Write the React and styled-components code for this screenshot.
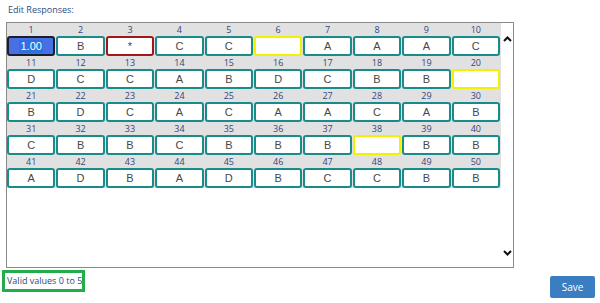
import React from 'react'
import styled, { createGlobalStyle } from 'styled-components'

const responses = [
  '1.00', 'B', '*', 'C', 'C', '', 'A', 'A', 'A', 'C',
  'D', 'C', 'C', 'A', 'B', 'D', 'C', 'B', 'B', '',
  'B', 'D', 'C', 'A', 'C', 'A', 'A', 'C', 'A', 'B',
  'C', 'B', 'B', 'C', 'B', 'B', 'B', '', 'B', 'B',
  'A', 'D', 'B', 'A', 'D', 'B', 'C', 'C', 'B', 'B',
]

function stateOf(value, index) {
  if (index === 0) return 'selected'
  if (value === '*') return 'invalid'
  if (value === '') return 'empty'
  return 'ok'
}

function App() {
  return (
    <Page>
      <GlobalStyle />
      <Title>Edit Responses:</Title>
      <Panel>
        <Grid>
          {responses.map((value, i) => (
            <Cell key={i}>
              <Num>{i + 1}</Num>
              <Answer $state={stateOf(value, i)}>
                {i === 0 ? <Highlight>{value}</Highlight> : value}
              </Answer>
            </Cell>
          ))}
        </Grid>
        <Scroll>
          <svg width="9" height="6" viewBox="0 0 9 6">
            <polyline points="1,5 4.5,1.5 8,5" fill="none" stroke="#111" strokeWidth="2" />
          </svg>
          <svg width="9" height="6" viewBox="0 0 9 6">
            <polyline points="1,1 4.5,4.5 8,1" fill="none" stroke="#111" strokeWidth="2" />
          </svg>
        </Scroll>
      </Panel>
      <Footer>
        <Valid>Valid values 0 to 5</Valid>
        <SaveButton>Save</SaveButton>
      </Footer>
    </Page>
  )
}

export default App

const GlobalStyle = createGlobalStyle`
  body {
    margin: 0;
    background: #fff;
    font-family: "Open Sans", "Noto Sans", sans-serif;
  }
`

const Page = styled.div`
  width: 600px;
  height: 303px;
  padding-left: 2px;
  box-sizing: border-box;
`

const Title = styled.div`
  height: 22px;
  line-height: 20px;
  padding-left: 6px;
  font-size: 9px;
  color: #2b4a7e;
`

const Panel = styled.div`
  margin-left: 4px;
  width: 508px;
  height: 246px;
  box-sizing: border-box;
  border: 1px solid #8a8a8a;
  display: flex;
`

const Grid = styled.div`
  width: 494px;
  height: 165px;
  background: #e1e1e1;
  display: grid;
  grid-template-columns: repeat(10, 1fr);
  grid-auto-rows: 33px;
  column-gap: 1px;
  padding-right: 1px;
  box-sizing: border-box;
`

const Cell = styled.div`
  display: flex;
  flex-direction: column;
`

const Num = styled.div`
  height: 13px;
  line-height: 13px;
  text-align: center;
  font-size: 9px;
  color: #34467a;
`

const borders = {
  ok: '#198b8b',
  invalid: '#a3171b',
  empty: '#f2f200',
  selected: '#1b1f2b',
}

const Answer = styled.div`
  height: 20px;
  box-sizing: border-box;
  border: 2px solid ${p => borders[p.$state]};
  border-radius: 3px;
  background: ${p => (p.$state === 'selected' ? '#4a6ee3' : '#fff')};
  display: flex;
  align-items: center;
  justify-content: center;
  font-family: "Liberation Sans", Arial, sans-serif;
  font-size: 11px;
  color: #474747;
`

const Highlight = styled.span`
  background: #2e6fe2;
  color: #fff;
  line-height: 13px;
  padding: 0 1px;
`

const Scroll = styled.div`
  flex: 1;
  display: flex;
  flex-direction: column;
  justify-content: space-between;
  align-items: center;
  padding: 13px 0 11px 1px;
`

const Footer = styled.div`
  display: flex;
  justify-content: space-between;
  align-items: flex-start;
  padding-right: 5px;
`

const Valid = styled.div`
  margin-top: 2px;
  width: 83px;
  height: 22px;
  box-sizing: border-box;
  border: 3px solid #22ad4a;
  padding-left: 2px;
  line-height: 16px;
  font-size: 9px;
  color: #2b4a7e;
  white-space: nowrap;
`

const SaveButton = styled.button`
  margin-top: 8px;
  width: 45px;
  height: 22px;
  border: none;
  border-radius: 2px;
  background: #3a7ec1;
  color: #fff;
  font-family: "Open Sans", "Noto Sans", sans-serif;
  font-size: 10px;
  padding: 0;
`
